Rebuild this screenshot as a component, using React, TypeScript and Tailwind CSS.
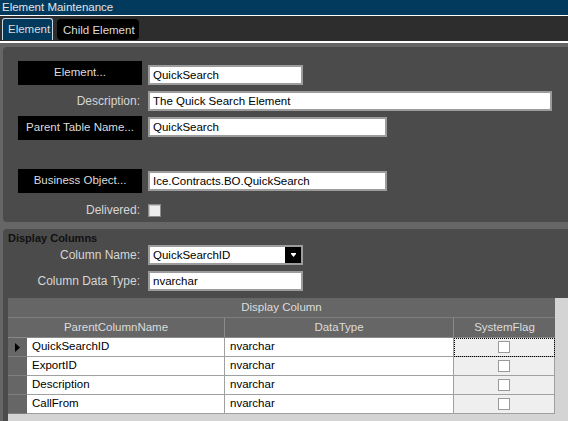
import React from "react";

const LABEL_W = "w-[124px]";

const BlackButton: React.FC<{ label: string }> = ({ label }) => (
  <div
    className={`${LABEL_W} h-[24px] shrink-0 bg-black text-[#dcdcdc] text-[11.5px] flex items-center justify-center`}
  >
    {label}
  </div>
);

const Label: React.FC<{ label: string }> = ({ label }) => (
  <div className={`${LABEL_W} shrink-0 text-right pr-[2px] text-[12px] text-[#d6d6d6]`}>
    {label}
  </div>
);

const TextBox: React.FC<{ value: string; className?: string }> = ({ value, className = "" }) => (
  <div
    className={`h-[20px] bg-white border-2 border-[#9c9c9c] text-black text-[11.5px] leading-[16px] pl-[3px] whitespace-nowrap overflow-hidden ${className}`}
  >
    {value}
  </div>
);

const ROWS = ["QuickSearchID", "ExportID", "Description", "CallFrom"];

export default function App() {
  return (
    <div className="w-[568px] h-[421px] overflow-hidden flex flex-col bg-[#666666] font-['Liberation_Sans',Arial,sans-serif] text-[12px]">
      {/* title bar */}
      <div className="h-[15px] shrink-0 bg-[#023a5d] text-[#e4e4e4] text-[11.5px] leading-[15px] pl-[2px]">
        Element Maintenance
      </div>
      <div className="h-px shrink-0 bg-white" />

      {/* tabs */}
      <div className="h-[25px] shrink-0 bg-[#2d2d2d] flex items-end gap-[4px] pl-[2px] pb-px">
        <div className="w-[51px] h-[22px] bg-[#023a5d] border border-b-0 border-[#c8d8e4] rounded-t-[3px] text-[#dcdcdc] text-[11.5px] flex items-center pl-[5px]">
          Element
        </div>
        <div className="w-[82px] h-[21px] bg-black rounded-[4px] text-[#dcdcdc] text-[11.5px] flex items-center pl-[6px] pt-[2px]">
          Child Element
        </div>
      </div>
      <div className="h-[2px] shrink-0 bg-white" />

      <div className="flex-1 flex flex-col pt-[4px] min-h-0">
        {/* element panel */}
        <div className="ml-[3px] h-[175px] shrink-0 bg-[#4b4b4b] rounded-l-[4px] pl-[15px] pt-[14px] flex flex-col">
          <div className="flex gap-[6px] items-start">
            <BlackButton label="Element..." />
            <TextBox value="QuickSearch" className="w-[155px] mt-[4px]" />
          </div>
          <div className="flex gap-[6px] items-center mt-[6px]">
            <Label label="Description:" />
            <TextBox value="The Quick Search Element" className="w-[404px]" />
          </div>
          <div className="flex gap-[6px] items-start mt-[5px]">
            <BlackButton label="Parent Table Name..." />
            <TextBox value="QuickSearch" className="w-[239px] mt-px" />
          </div>
          <div className="flex gap-[6px] items-start mt-[29px]">
            <BlackButton label="Business Object..." />
            <TextBox value="Ice.Contracts.BO.QuickSearch" className="w-[239px] mt-[2px]" />
          </div>
          <div className="flex gap-[6px] items-center mt-[8px]">
            <Label label="Delivered:" />
            <div className="w-[13px] h-[13px] bg-[#ececec] border border-[#8c8c8c] shadow-[inset_1px_1px_0_#c4c4c4]" />
          </div>
        </div>

        {/* display columns panel */}
        <div className="ml-[3px] mt-[7px] flex-1 bg-[#4b4b4b] rounded-tl-[4px] flex flex-col min-h-0">
          <div className="mt-[2px] pl-[5px] h-[14px] leading-[14px] font-bold text-[11px] text-[#111]">
            Display Columns
          </div>
          <div className="pl-[15px] flex gap-[6px] items-center">
            <Label label="Column Name:" />
            <div className="w-[155px] h-[20px] bg-white border-2 border-[#9c9c9c] flex items-stretch">
              <div className="flex-1 text-[11.5px] leading-[16px] pl-[3px] text-black">QuickSearchID</div>
              <div className="w-[16px] bg-black flex items-center justify-center">
                <svg width="5" height="4" viewBox="0 0 5 4" aria-hidden="true">
                  <rect x="0" y="0" width="5" height="1" fill="#fff" />
                  <path d="M0 1h5L2.5 4z" fill="#fff" />
                </svg>
              </div>
            </div>
          </div>
          <div className="pl-[15px] flex gap-[6px] items-center mt-[6px]">
            <Label label="Column Data Type:" />
            <TextBox value="nvarchar" className="w-[155px]" />
          </div>

          {/* grid */}
          <div className="ml-[5px] mt-[7px] flex-1 bg-[#d4d4d4] text-[11.5px]">
            <div className="w-[547px]">
              <div className="h-[20px] bg-[#666666] border-b border-[#7e7e7e] flex items-center justify-center text-[#dcdcdc]">
                Display Column
              </div>
              <div className="h-[20px] bg-[#666666] border-b border-[#8a8a8a] flex text-[#dcdcdc]">
                <div className="w-[217px] border-r border-[#8a8a8a] flex items-center justify-center">
                  ParentColumnName
                </div>
                <div className="w-[229px] border-r border-[#8a8a8a] flex items-center justify-center">
                  DataType
                </div>
                <div className="w-[101px] flex items-center justify-center">SystemFlag</div>
              </div>
              {ROWS.map((name, i) => (
                <div key={name} className="h-[19px] flex">
                  <div className="w-[19px] bg-[#666666] border-b border-[#7e7e7e] flex items-center pl-[7px]">
                    {i === 0 && (
                      <svg width="5" height="9" viewBox="0 0 5 9" aria-hidden="true">
                        <path d="M0 0l5 4.5L0 9z" fill="#000" />
                      </svg>
                    )}
                  </div>
                  <div className="w-[198px] bg-white border-b border-r border-[#a0a0a0] pl-[5px] flex items-center text-black">
                    {name}
                  </div>
                  <div className="w-[229px] bg-white border-b border-r border-[#a0a0a0] pl-[5px] flex items-center text-black">
                    nvarchar
                  </div>
                  <div
                    className={`w-[101px] bg-[#efefef] border-b border-r border-[#a0a0a0] flex items-center justify-center ${
                      i === 0 ? "outline-1 outline-dotted outline-black -outline-offset-1" : ""
                    }`}
                  >
                    <div className="w-[12px] h-[12px] bg-white border border-[#9a9a9a]" />
                  </div>
                </div>
              ))}
            </div>
          </div>
        </div>
      </div>
    </div>
  );
}
